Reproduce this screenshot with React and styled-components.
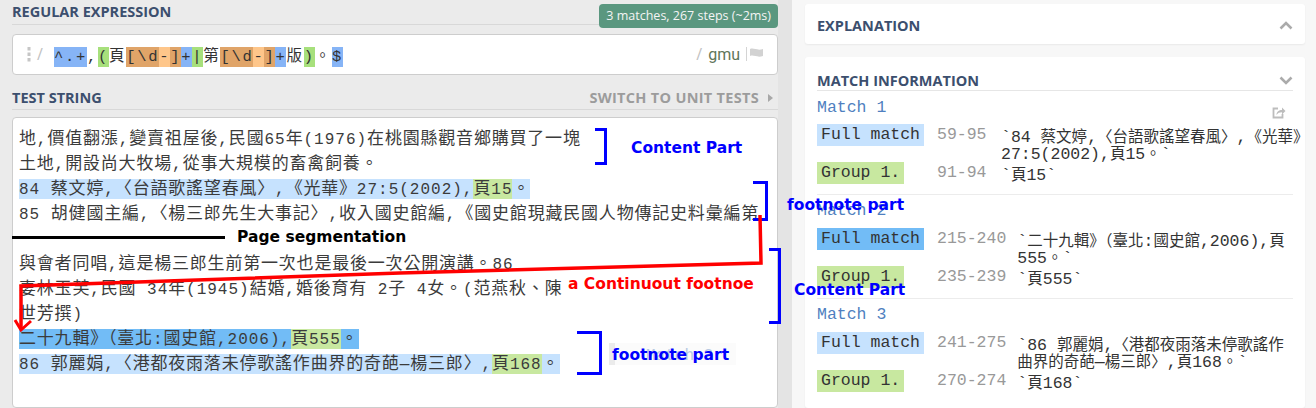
import styled, { createGlobalStyle } from "styled-components";

const GlobalStyle = createGlobalStyle`
  html, body {
    margin: 0;
    padding: 0;
  }
  body {
    width: 1316px;
    height: 408px;
    overflow: hidden;
    font-family: "Open Sans", "Liberation Sans", sans-serif;
  }
`;

const HAN_RUN = /([\u2e80-\u303f\u3400-\u9fff\uf900-\ufaff\uff00-\uffef]+)/;

const Han = styled.span`
  font-family: "Noto Sans CJK TC", "Noto Sans CJK SC", sans-serif;
  font-size: ${(p) => p.$size};
  letter-spacing: ${(p) => p.$ls || "0px"};
`;

// wrap every run of CJK characters so they get their own size
const mix = (text, size, ls) =>
  text.split(HAN_RUN).map((part, i) =>
    i % 2 === 1 ? (
      <Han key={i} $size={size} $ls={ls}>
        {part}
      </Han>
    ) : (
      part || null
    )
  );

const Page = styled.div`
  position: relative;
  display: flex;
  width: 1316px;
  height: 408px;
  overflow: hidden;
`;

/* ---------- left side ---------- */

const LeftPanel = styled.div`
  flex: none;
  width: 766px;
  padding-left: 12px;
  background: #ebebeb;
  display: flex;
  flex-direction: column;
`;

const Gutter = styled.div`
  flex: none;
  width: 14px;
  background: #e4e4e4;
`;

const HeadRow = styled.div`
  display: flex;
  align-items: flex-start;
  justify-content: space-between;
  border-bottom: ${(p) => (p.$ruled ? "1px solid #d8d8d8" : "none")};
  margin-top: ${(p) => p.$top || 0}px;
`;

const Heading = styled.div`
  flex: ${(p) => (p.$grow ? 1 : "none")};
  height: ${(p) => p.$h}px;
  line-height: ${(p) => p.$h}px;
  font-size: 14.5px;
  font-weight: 700;
  color: #3c4f6e;
  border-bottom: ${(p) => (p.$grow ? "1px solid #d8d8d8" : "none")};
`;

const Badge = styled.div`
  margin-top: 4px;
  height: 24px;
  line-height: 24px;
  padding: 0 7px;
  border-radius: 4px;
  background: #5a977f;
  color: #f4f4f4;
  font-size: 12.5px;
`;

const SwitchLink = styled.div`
  height: 22px;
  line-height: 22px;
  padding-right: 5px;
  font-size: 14.5px;
  font-weight: 700;
  letter-spacing: 0.3px;
  color: #9c9c9c;
  display: flex;
  align-items: center;
  gap: 9px;
`;

const Caret = styled.span`
  width: 0;
  height: 0;
  border-top: 4px solid transparent;
  border-bottom: 4px solid transparent;
  border-left: 5px solid #a8a8a8;
`;

const RegexBox = styled.div`
  margin-top: 6px;
  height: 42px;
  box-sizing: border-box;
  background: #fff;
  border: 1px solid #cdcdcd;
  border-radius: 4px;
  display: flex;
  align-items: center;
  padding: 0 13px 0 14px;
`;

const Slash = styled.span`
  margin-left: ${(p) => p.$ml}px;
  margin-right: ${(p) => p.$mr}px;
  color: #c2c2c2;
  font-size: 16px;
  font-family: "Open Sans", sans-serif;
`;

const RegexText = styled.div`
  flex: 1;
  font-family: "Liberation Mono", "Noto Sans CJK TC", monospace;
  font-size: 15.5px;
  letter-spacing: 1.7px;
  color: #333;
  white-space: pre;
`;

const Tok = styled.span`
  background: ${(p) => p.$bg};
  padding: 1px 0;
`;

const Flags = styled.span`
  font-family: "Roboto", "Open Sans", sans-serif;
  font-size: 16px;
  color: #5f765a;
  margin-right: 6px;
`;

const Sep = styled.span`
  width: 1px;
  height: 14px;
  background: #d4d4d4;
  margin-right: 2px;
`;

const TestBox = styled.div`
  margin-top: 7px;
  height: 300px;
  box-sizing: border-box;
  background: #fff;
  border: 1px solid #cdcdcd;
  border-radius: 4px;
  padding: 6px 6px;
  font-family: "Liberation Mono", monospace;
  font-size: 16px;
  letter-spacing: 1px;
  color: #3b3b3b;
`;

const TestLine = styled.div`
  height: 25px;
  line-height: 25px;
  white-space: pre;
  overflow: hidden;
`;

const MARK = {
  light: "#c6e2fe",
  dark: "#72bcf6",
  green: "#c8e8a0",
};

const Mark = styled.span`
  background: ${(p) => MARK[p.$c]};
  padding: 2px 0;
`;

/* ---------- right side ---------- */

const RightPanel = styled.div`
  flex: 1;
  min-width: 0;
  background: #f7f7f7;
  padding: 4px 11px 0 13px;
  display: flex;
  flex-direction: column;
  gap: 13px;
`;

const Card = styled.div`
  background: #fff;
  border-radius: 3px;
  box-shadow: 0 1px 2px rgba(0, 0, 0, 0.06);
  padding: 0 12px;
  flex: ${(p) => (p.$fill ? 1 : "none")};
`;

const CardHead = styled.div`
  display: flex;
  justify-content: space-between;
  align-items: center;
  padding: ${(p) => (p.$ruled ? "13px 0 0" : "11px 0 9px")};
  height: 20px;
  box-sizing: content-box;
  border-bottom: ${(p) => (p.$ruled ? "1px solid #e6e6e6" : "none")};
  font-size: 14.5px;
  font-weight: 700;
  color: #3c4f6e;
`;

const MatchBlock = styled.div`
  padding: ${(p) => (p.$first ? 7 : 6)}px 0 10px;
  border-bottom: ${(p) => (p.$last ? "none" : "1px solid #ececec")};
  font-family: "Liberation Mono", monospace;
  font-size: 16.5px;
  color: #333;
`;

const MatchTitle = styled.div`
  display: flex;
  justify-content: space-between;
  align-items: flex-start;
  height: 20px;
  line-height: 20px;
  margin-bottom: ${(p) => (p.$first ? 6 : 7)}px;
  color: #4f7fc0;
`;

const ShareIcon = styled.svg`
  margin-top: 8px;
  margin-right: 7px;
`;

const Row = styled.div`
  display: flex;
  align-items: flex-start;
  margin-bottom: ${(p) => (p.$gap ? 2 : 0)}px;
`;

const LabelCell = styled.div`
  width: 120px;
  flex: none;
`;

const Label = styled.span`
  display: inline-block;
  padding: 0 4px;
  line-height: 22px;
  background: ${(p) => MARK[p.$c]};
`;

const Range = styled.div`
  min-width: 64px;
  box-sizing: border-box;
  padding-right: 11px;
  line-height: 22px;
  color: #999;
  flex: none;
`;

const Value = styled.div`
  padding-top: 3px;
  white-space: pre;
`;

const ValueLine = styled.div`
  height: 16.5px;
  line-height: 16.5px;
`;

/* ---------- annotations ---------- */

const Overlay = styled.div`
  position: absolute;
  inset: 0;
  pointer-events: none;
`;

const Bracket = styled.div`
  position: absolute;
  left: ${(p) => p.$x}px;
  top: ${(p) => p.$y}px;
  width: ${(p) => p.$w}px;
  height: ${(p) => p.$h}px;
  box-sizing: border-box;
  border: 3px solid #0000ff;
  border-left: none;
`;

const Stroke = styled.div`
  position: absolute;
  left: 12px;
  top: 236px;
  width: 213px;
  height: 3px;
  background: #000;
`;

const Note = styled.div`
  position: absolute;
  left: ${(p) => p.$x}px;
  top: ${(p) => p.$y - 10}px;
  line-height: 20px;
  font-family: "DejaVu Sans", sans-serif;
  font-weight: 700;
  font-size: 15.5px;
  color: ${(p) => p.$color};
  white-space: nowrap;
`;

const Snippet = styled.div`
  position: absolute;
  left: 609px;
  top: 343px;
  width: 127px;
  height: 22px;
  padding-left: 31px;
  box-sizing: border-box;
  background: #fbfbfb;
  border-left: 6px solid #ebebeb;
  font-family: "Liberation Mono", monospace;
  font-size: 16px;
  line-height: 26px;
  color: #b7c8e2;
  overflow: hidden;
`;

const Arrow = styled.svg`
  position: absolute;
  left: 0;
  top: 0;
`;

const Chevron = ({ up }) => (
  <svg width="14" height="9" viewBox="0 0 14 9">
    <polyline
      points={up ? "1.5,7.5 7,2 12.5,7.5" : "1.5,1.5 7,7 12.5,1.5"}
      fill="none"
      stroke="#ababab"
      strokeWidth="2.6"
    />
  </svg>
);

const matches = [
  {
    n: 1,
    tone: "light",
    full: ["59-95", ["`84 蔡文婷,〈台語歌謠望春風〉,《光華》", "27:5(2002),頁15。`"]],
    group: ["91-94", ["`頁15`"]],
  },
  {
    n: 2,
    tone: "dark",
    full: ["215-240", ["`二十九輯》（臺北:國史館,2006),頁", "555。`"]],
    group: ["235-239", ["`頁555`"]],
  },
  {
    n: 3,
    tone: "light",
    full: ["241-275", ["`86 郭麗娟,〈港都夜雨落未停歌謠作", "曲界的奇葩—楊三郎〉,頁168。`"]],
    group: ["270-274", ["`頁168`"]],
  },
];

const ValueLines = ({ lines }) => (
  <Value>
    {lines.map((line, i) => (
      <ValueLine key={i}>{mix(line, "15.5px")}</ValueLine>
    ))}
  </Value>
);

const t = (text) => mix(text, "17px", "0.8px");

const BLUE = "#86b4f6";
const GREEN = "#a7e07c";
const ORANGE = "#e0a468";
const PEACH = "#fec68a";

const ClassTok = () => (
  <>
    <Tok $bg={ORANGE}>[\d</Tok>
    <Tok $bg={PEACH}>-</Tok>
    <Tok $bg={ORANGE}>]</Tok>
  </>
);

export default function App() {
  return (
    <>
      <GlobalStyle />
      <Page>
        <LeftPanel>
          <HeadRow>
            <Heading $grow $h={24}>
              REGULAR EXPRESSION
            </Heading>
            <Badge>3 matches, 267 steps (~2ms)</Badge>
          </HeadRow>

          <RegexBox>
            <svg width="4" height="15" viewBox="0 0 4 15">
              <rect x="0.5" y="0" width="3" height="3.5" fill="#c6c6c6" />
              <rect x="0.5" y="5.5" width="3" height="3.5" fill="#c6c6c6" />
              <rect x="0.5" y="11" width="3" height="3.5" fill="#c6c6c6" />
            </svg>
            <Slash $ml={6} $mr={11}>/</Slash>
            <RegexText>
              <Tok $bg={BLUE}>^.+</Tok>,<Tok $bg={GREEN}>(</Tok>頁
              <ClassTok />
              <Tok $bg={BLUE}>+</Tok>
              <Tok $bg={GREEN}>|</Tok>第
              <ClassTok />
              <Tok $bg={BLUE}>+</Tok>版<Tok $bg={GREEN}>)</Tok>。
              <Tok $bg={BLUE}>$</Tok>
            </RegexText>
            <Slash $ml={0} $mr={6}>/</Slash>
            <Flags>gmu</Flags>
            <Sep />
            <svg width="15" height="13" viewBox="0 0 15 13">
              <path d="M1 1 C5 -0.5 8 3 14 1 V8 C8 10 5 6.5 1 8 Z" fill="#d2d2d2" />
            </svg>
          </RegexBox>

          <HeadRow $ruled $top={12}>
            <Heading $h={22}>TEST STRING</Heading>
            <SwitchLink>
              SWITCH TO UNIT TESTS <Caret />
            </SwitchLink>
          </HeadRow>

          <TestBox>
            <TestLine>{t("地,價值翻漲,變賣祖屋後,民國65年(1976)在桃園縣觀音鄉購買了一塊")}</TestLine>
            <TestLine>{t("土地,開設尚大牧場,從事大規模的畜禽飼養。")}</TestLine>
            <TestLine>
              <Mark $c="light">
                {t("84 蔡文婷,〈台語歌謠望春風〉,《光華》27:5(2002),")}
                <Mark $c="green">{t("頁15")}</Mark>
                {t("。")}
              </Mark>
            </TestLine>
            <TestLine>
              {t("85 胡健國主編,〈楊三郎先生大事記〉,收入國史館編,《國史館現藏民國人物傳記史料彙編第")}
            </TestLine>
            <TestLine />
            <TestLine>{t("與會者同唱,這是楊三郎生前第一次也是最後一次公開演講。86")}</TestLine>
            <TestLine>{t("妻林玉芙,民國 34年(1945)結婚,婚後育有 2子 4女。(范燕秋、陳")}</TestLine>
            <TestLine>{t("世芳撰)")}</TestLine>
            <TestLine>
              <Mark $c="dark">
                {t("二十九輯》（臺北:國史館,2006),")}
                <Mark $c="green">{t("頁555")}</Mark>
                {t("。")}
              </Mark>
            </TestLine>
            <TestLine>
              <Mark $c="light">
                {t("86 郭麗娟,〈港都夜雨落未停歌謠作曲界的奇葩—楊三郎〉,")}
                <Mark $c="green">{t("頁168")}</Mark>
                {t("。")}
              </Mark>
            </TestLine>
          </TestBox>
        </LeftPanel>

        <Gutter />

        <RightPanel>
          <Card>
            <CardHead>
              EXPLANATION
              <Chevron up />
            </CardHead>
          </Card>
          <Card $fill>
            <CardHead $ruled>
              MATCH INFORMATION
              <Chevron />
            </CardHead>
            {matches.map((m, i) => (
              <MatchBlock key={m.n} $first={i === 0} $last={i === matches.length - 1}>
                <MatchTitle $first={i === 0}>
                  Match {m.n}
                  {m.n === 1 && (
                    <ShareIcon width="14" height="13" viewBox="0 0 14 13">
                      <path
                        d="M6 2.5 H1.5 V11.5 H10.5 V8"
                        fill="none"
                        stroke="#bdbdbd"
                        strokeWidth="1.8"
                      />
                      <path
                        d="M4.5 9 C4.5 5.5 7 4 10 4 V1.5 L13.5 5 L10 8.5 V6.3 C7.5 6.3 5.8 7 4.5 9 Z"
                        fill="#bdbdbd"
                      />
                    </ShareIcon>
                  )}
                </MatchTitle>
                <Row $gap>
                  <LabelCell>
                    <Label $c={m.tone}>Full match</Label>
                  </LabelCell>
                  <Range>{m.full[0]}</Range>
                  <ValueLines lines={m.full[1]} />
                </Row>
                <Row>
                  <LabelCell>
                    <Label $c="green">Group 1.</Label>
                  </LabelCell>
                  <Range>{m.group[0]}</Range>
                  <ValueLines lines={m.group[1]} />
                </Row>
              </MatchBlock>
            ))}
          </Card>
        </RightPanel>

        <Overlay>
          <Bracket $x={595} $y={128} $w={12} $h={37} />
          <Note $x={631} $y={148} $color="#0000ff">
            Content Part
          </Note>
          <Bracket $x={753} $y={181} $w={15} $h={40} />
          <Note $x={787} $y={205} $color="#0000ff">
            footnote part
          </Note>
          <Stroke />
          <Note $x={237} $y={237} $color="#000">
            Page segmentation
          </Note>
          <Arrow width="1316" height="408" viewBox="0 0 1316 408">
            <polyline
              points="760,215 761,263 400,273 21,286 21,328"
              fill="none"
              stroke="#ff0000"
              strokeWidth="3.5"
            />
            <polyline
              points="15,320 21,330 31,321"
              fill="none"
              stroke="#ff0000"
              strokeWidth="3"
            />
          </Arrow>
          <Note $x={568} $y={284} $color="#ff0000">
            a Continuout footnoe
          </Note>
          <Bracket $x={769} $y={248} $w={12} $h={76} />
          <Note $x={794} $y={290} $color="#0000ff">
            Content Part
          </Note>
          <Bracket $x={577} $y={331} $w={25} $h={44} />
          <Snippet>Match 2</Snippet>
          <Note $x={612} $y={355} $color="#0000ff">
            footnote part
          </Note>
        </Overlay>
      </Page>
    </>
  );
}
